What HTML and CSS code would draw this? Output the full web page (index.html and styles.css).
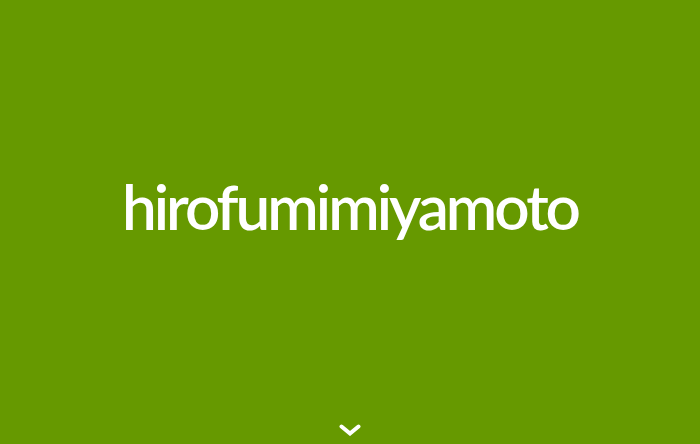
FILE: index.html
```html
<!DOCTYPE html>
<html lang="en">
<head>
<meta charset="utf-8">
<title>hirofumimiyamoto</title>
<link rel="stylesheet" href="styles.css">
</head>
<body>
<main class="hero">
  <div class="hero-center">
    <h1 class="title">hirofumimiyamoto</h1>
  </div>
  <div class="scroll">
    <svg class="chevron" width="22" height="12" viewBox="0 0 22 12" aria-hidden="true">
      <path d="M2.5 2.5 L11 9.5 L19.5 2.5" fill="none" stroke="#fff" stroke-width="4" stroke-linecap="round" stroke-linejoin="miter"/>
    </svg>
  </div>
</main>
</body>
</html>
```
FILE: styles.css
```css
html, body {
  margin: 0;
  padding: 0;
  background: #669900;
}
.hero {
  height: 444px;
  display: flex;
  flex-direction: column;
  background: #669900;
}
.hero-center {
  flex: 1;
  display: flex;
  align-items: center;
  justify-content: center;
  padding-bottom: 12px;
}
.title {
  margin: 0;
  color: #fff;
  font-family: "Lato", "Noto Sans", sans-serif;
  font-weight: 600;
  font-size: 62px;
  line-height: 1;
  letter-spacing: -3px;
}
.scroll {
  display: flex;
  justify-content: center;
  padding-bottom: 8px;
}
.chevron {
  display: block;
}
```
